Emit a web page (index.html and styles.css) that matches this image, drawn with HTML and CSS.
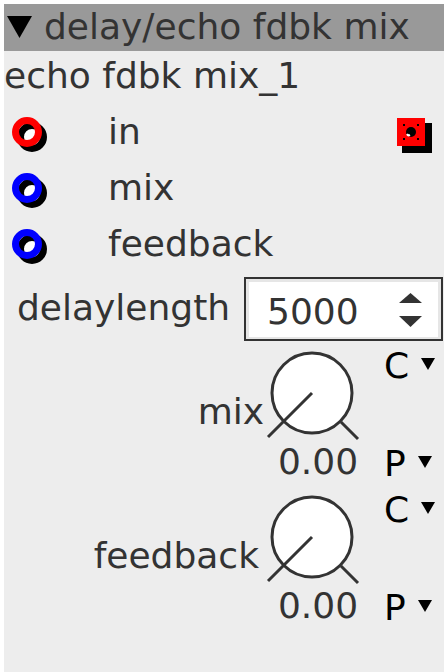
FILE: index.html
```html
<!DOCTYPE html>
<html lang="en">
<head>
    <meta charset="UTF-8">
    <title>delay/echo fdbk mix</title>
    <link rel="stylesheet" href="styles.css">
</head>
<body>
<div class="panel">
    <div class="header">
        <svg class="collapse" width="26" height="23" viewBox="0 0 26 23"><polygon points="0,0 25,0 12.5,22" fill="#000"/></svg>
        <span>delay/echo fdbk mix</span>
    </div>

    <div class="title">echo fdbk mix_1</div>

    <!-- ports -->
    <div class="ports">
        <div class="port">
            <svg class="ring" width="40" height="40" viewBox="0 0 40 40">
                <circle cx="24" cy="25" r="11.5" fill="#fff" stroke="#000" stroke-width="7"/>
                <circle cx="19" cy="20" r="11.5" fill="none" stroke="#f00" stroke-width="7"/>
            </svg>
            <span class="portName">in</span>
            <svg class="outlet" width="40" height="42" viewBox="0 0 40 42">
                <rect x="8" y="12" width="30" height="30" fill="#000"/>
                <rect x="3" y="7" width="28" height="28" fill="#f00"/>
                <circle cx="17" cy="21" r="5" fill="#000"/>
                <path d="M13 23 q1 2 3 1" stroke="#fff" stroke-width="2" fill="none"/>
                <rect x="9" y="13" width="2" height="2" fill="#000"/>
                <rect x="23" y="13" width="2" height="2" fill="#000"/>
                <rect x="9" y="27" width="2" height="2" fill="#000"/>
                <rect x="23" y="27" width="2" height="2" fill="#000"/>
            </svg>
        </div>
        <div class="port">
            <svg class="ring" width="40" height="40" viewBox="0 0 40 40">
                <circle cx="24" cy="25" r="11.5" fill="#fff" stroke="#000" stroke-width="7"/>
                <circle cx="19" cy="20" r="11.5" fill="none" stroke="#00f" stroke-width="7"/>
            </svg>
            <span class="portName">mix</span>
        </div>
        <div class="port">
            <svg class="ring" width="40" height="40" viewBox="0 0 40 40">
                <circle cx="24" cy="25" r="11.5" fill="#fff" stroke="#000" stroke-width="7"/>
                <circle cx="19" cy="20" r="11.5" fill="none" stroke="#00f" stroke-width="7"/>
            </svg>
            <span class="portName">feedback</span>
        </div>
    </div>

    <!-- number box -->
    <div class="paramRow">
        <span class="paramLabel">delaylength</span>
        <div class="spinbox">
            <span class="spinValue">5000</span>
            <svg width="24" height="38" viewBox="0 0 24 38">
                <polygon points="0,13 23,13 11.5,3" fill="#333"/>
                <polygon points="0,26 23,26 11.5,37" fill="#333"/>
            </svg>
        </div>
    </div>

    <!-- knobs -->
    <div class="knobRow">
        <span class="knobLabel">mix</span>
        <div class="knobCol">
            <svg width="96" height="94" viewBox="0 0 96 94">
                <circle cx="46" cy="46" r="40" fill="#fff" stroke="#333" stroke-width="3"/>
                <line x1="46" y1="46" x2="2" y2="90" stroke="#333" stroke-width="3"/>
                <line x1="75" y1="75" x2="92" y2="92" stroke="#333" stroke-width="3"/>
            </svg>
            <div class="knobValue">0.00</div>
        </div>
        <div class="cpCol">
            <span>C<svg class="drop" width="14" height="12" viewBox="0 0 14 12"><polygon points="0,0 14,0 7,12" fill="#000"/></svg></span>
            <span>P<svg class="drop" width="14" height="12" viewBox="0 0 14 12"><polygon points="0,0 14,0 7,12" fill="#000"/></svg></span>
        </div>
    </div>

    <div class="knobRow second">
        <span class="knobLabel">feedback</span>
        <div class="knobCol">
            <svg width="96" height="94" viewBox="0 0 96 94">
                <circle cx="46" cy="46" r="40" fill="#fff" stroke="#333" stroke-width="3"/>
                <line x1="46" y1="46" x2="2" y2="90" stroke="#333" stroke-width="3"/>
                <line x1="75" y1="75" x2="92" y2="92" stroke="#333" stroke-width="3"/>
            </svg>
            <div class="knobValue">0.00</div>
        </div>
        <div class="cpCol">
            <span>C<svg class="drop" width="14" height="12" viewBox="0 0 14 12"><polygon points="0,0 14,0 7,12" fill="#000"/></svg></span>
            <span>P<svg class="drop" width="14" height="12" viewBox="0 0 14 12"><polygon points="0,0 14,0 7,12" fill="#000"/></svg></span>
        </div>
    </div>
</div>
</body>
</html>
```

FILE: styles.css
```css
body {
    margin: 0;
    background-color: #fff;
    font-family: "DejaVu Sans", Verdana, sans-serif;
    font-size: 36px;
    color: #333;
}

.panel {
    margin: 4px 4px 0 4px;
    min-height: 668px;
    background-color: #ededed;
}

.header {
    display: flex;
    align-items: center;
    height: 47px;
    line-height: 45px;
    padding-bottom: 2px;
    box-sizing: border-box;
    background-color: #999;
}

.collapse {
    margin-left: 3px;
    margin-right: 11px;
    margin-top: 2px;
}

.title {
    line-height: 49px;
}

.ports {
    padding-top: 4px;
}

.port {
    display: flex;
    align-items: center;
    height: 56px;
    padding-left: 4px;
}

.portName {
    margin-left: 60px;
    line-height: 42px;
}

.outlet {
    margin-left: auto;
    margin-right: 10px;
}

.paramRow {
    display: flex;
    align-items: center;
    height: 64px;
    margin-top: 5px;
}

.paramLabel {
    padding-left: 13px;
    padding-bottom: 3px;
    line-height: 42px;
}

.spinbox {
    display: flex;
    align-items: center;
    justify-content: space-between;
    width: 199px;
    height: 64px;
    margin-left: auto;
    margin-right: 1px;
    padding: 0 18px 0 21px;
    box-sizing: border-box;
    border: 2px solid #333;
    background-color: #fff;
    box-shadow: inset 3px 3px 0 #e6e6e6, inset -3px -2px 0 #e6e6e6;
}

.spinValue {
    line-height: 42px;
    padding-top: 5px;
}

.knobRow {
    display: flex;
    height: 136px;
    margin-top: 6px;
}

.knobRow.second {
    margin-top: 8px;
}

.knobLabel {
    flex: 1;
    text-align: right;
    padding-top: 44px;
    padding-right: 2px;
    line-height: 42px;
}

.second .knobLabel {
    padding-right: 7px;
}

.knobCol {
    width: 96px;
}

.knobCol svg {
    display: block;
}

.knobValue {
    line-height: 42px;
    text-align: center;
    padding-left: 8px;
}

.cpCol {
    display: flex;
    flex-direction: column;
    justify-content: space-between;
    margin-left: 22px;
    width: 60px;
    color: #000;
    line-height: 38px;
}

.drop {
    margin-left: 12px;
    vertical-align: 8px;
}
```
